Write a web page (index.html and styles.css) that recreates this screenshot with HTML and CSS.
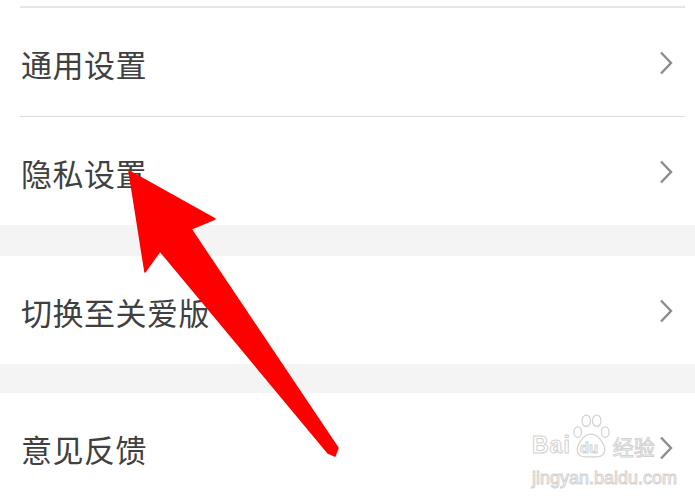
FILE: index.html
```html
<!DOCTYPE html>
<html lang="zh-CN">
<head>
  <meta charset="UTF-8" />
  <meta name="viewport" content="width=device-width, initial-scale=1.0"/>
  <title>设置</title>
  <link rel="stylesheet" href="styles.css">
</head>
<body>
  <div class="page">
    <div class="group">
      <div class="item">
        <div class="item-body stub"></div>
      </div>
      <div class="item">
        <div class="item-body">
          <span class="label">通用设置</span>
          <svg class="chevron" viewBox="0 0 14 24"><polyline points="2,1.5 12,12 2,22.5" /></svg>
        </div>
      </div>
      <div class="item">
        <div class="item-body last">
          <span class="label">隐私设置</span>
          <svg class="chevron" viewBox="0 0 14 24"><polyline points="2,1.5 12,12 2,22.5" /></svg>
        </div>
      </div>
    </div>

    <div class="gap"></div>

    <div class="group">
      <div class="item">
        <div class="item-body last">
          <span class="label">切换至关爱版</span>
          <svg class="chevron" viewBox="0 0 14 24"><polyline points="2,1.5 12,12 2,22.5" /></svg>
        </div>
      </div>
    </div>

    <div class="gap short"></div>

    <div class="group">
      <div class="item">
        <div class="item-body last">
          <span class="label">意见反馈</span>
          <svg class="chevron" viewBox="0 0 14 24"><polyline points="2,1.5 12,12 2,22.5" /></svg>
        </div>
      </div>
    </div>

    <!-- annotation arrow pointing at 隐私设置 -->
    <svg class="arrow" viewBox="0 0 695 498">
      <polygon points="129,171 215,219 191,229 338,448 335,456 328,453 160,251 145,272" />
    </svg>

    <div class="watermark">
      <div class="wm-logo">
        <span class="wm-bai">Bai</span>
        <span class="wm-paw">
          <svg viewBox="0 0 40 50">
            <ellipse cx="6" cy="22" rx="4" ry="5.5" />
            <ellipse cx="15" cy="10" rx="4.5" ry="6" />
            <ellipse cx="26" cy="10" rx="4.5" ry="6" />
            <ellipse cx="35" cy="22" rx="4" ry="5.5" />
            <path d="M20 24 C13 24 8 32 6 37 C4 43 8 48 14 48 L26 48 C32 48 36 43 34 37 C32 32 27 24 20 24 Z" />
          </svg>
          <span class="wm-du">du</span>
        </span>
        <span class="wm-jy">经验</span>
      </div>
      <div class="wm-url">jingyan.baidu.com</div>
    </div>
  </div>
</body>
</html>
```

FILE: styles.css
```css
body {
  margin: 0;
  background: #fff;
  font-family: "Noto Sans CJK SC", "Noto Sans", sans-serif;
  color: #333;
}
.page {
  position: relative;
  width: 695px;
  height: 498px;
  overflow: hidden;
}
.item {
  padding: 0 10px 0 20px;
}
.item-body {
  height: 108px;
  display: flex;
  align-items: center;
  justify-content: space-between;
  padding: 0 12px 0 1px;
  border-bottom: 1px solid #dcdcdc;
}
.item-body.stub {
  height: 6px;
  border-bottom: 2px solid #e6e6e6;
}
.item-body.last {
  border-bottom: none;
}
.label {
  font-size: 31px;
  line-height: 1;
  padding-top: 3px;
  letter-spacing: 0.5px;
  color: #404040;
}
.chevron {
  width: 14px;
  height: 24px;
  margin-top: 2px;
}
.chevron polyline {
  fill: none;
  stroke: #8c8c8c;
  stroke-width: 2.4;
}
.gap {
  height: 31px;
  background: #f4f4f4;
}
.gap.short {
  height: 29px;
}
.arrow {
  position: absolute;
  left: 0;
  top: 0;
  width: 695px;
  height: 498px;
}
.arrow polygon {
  fill: #ff0000;
  stroke: #ff0000;
  stroke-width: 1.5;
  stroke-linejoin: round;
}
.watermark {
  position: absolute;
  left: 532px;
  top: 410px;
  font-family: "Liberation Sans", Arial, sans-serif;
  color: rgba(255, 255, 255, 0.7);
  -webkit-text-stroke: 1px #d2d2d2;
}
.wm-logo {
  display: flex;
  align-items: flex-end;
  height: 52px;
}
.wm-bai {
  font-size: 23px;
  font-weight: bold;
  letter-spacing: 1px;
  line-height: 1;
  margin-bottom: 5px;
}
.wm-paw {
  position: relative;
  width: 38px;
  height: 52px;
  margin: 0 3px 0 1px;
}
.wm-paw svg {
  width: 38px;
  height: 50px;
}
.wm-paw ellipse,
.wm-paw path {
  fill: rgba(255, 255, 255, 0.6);
  stroke: #d2d2d2;
  stroke-width: 1.3;
}
.wm-du {
  position: absolute;
  left: 8px;
  bottom: 7px;
  font-size: 15px;
  font-weight: bold;
  line-height: 1;
}
.wm-jy {
  font-family: "Noto Sans CJK SC", sans-serif;
  font-size: 21px;
  line-height: 1;
  margin-bottom: 5px;
}
.wm-url {
  font-size: 18px;
  line-height: 1;
  margin-top: 7px;
}
```
